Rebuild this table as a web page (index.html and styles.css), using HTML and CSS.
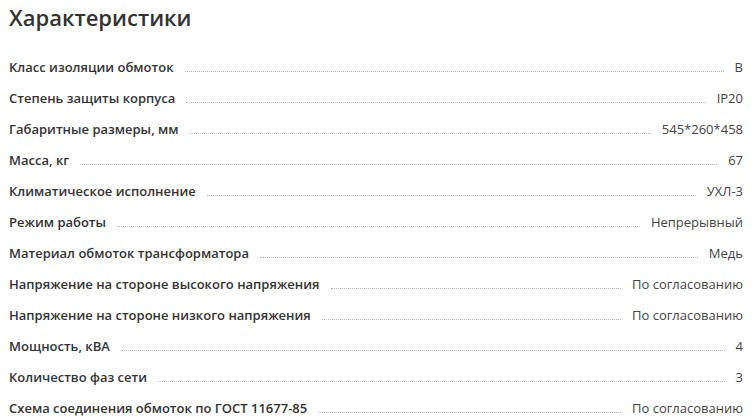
FILE: index.html
```html
<!DOCTYPE html>
<html lang="ru">
<head>
<meta charset="utf-8">
<link rel="stylesheet" href="styles.css">
</head>
<body>
<div class="specs">
  <h2 class="title">Характеристики</h2>
  <ul class="list">
    <li class="row"><span class="label">Класс изоляции обмоток</span><span class="dots"></span><span class="value">B</span></li>
    <li class="row"><span class="label">Степень защиты корпуса</span><span class="dots"></span><span class="value">IP20</span></li>
    <li class="row"><span class="label">Габаритные размеры, мм</span><span class="dots"></span><span class="value">545*260*458</span></li>
    <li class="row"><span class="label">Масса, кг</span><span class="dots"></span><span class="value">67</span></li>
    <li class="row"><span class="label">Климатическое исполнение</span><span class="dots"></span><span class="value">УХЛ-3</span></li>
    <li class="row"><span class="label">Режим работы</span><span class="dots"></span><span class="value">Непрерывный</span></li>
    <li class="row"><span class="label">Материал обмоток трансформатора</span><span class="dots"></span><span class="value">Медь</span></li>
    <li class="row"><span class="label">Напряжение на стороне высокого напряжения</span><span class="dots"></span><span class="value">По согласованию</span></li>
    <li class="row"><span class="label">Напряжение на стороне низкого напряжения</span><span class="dots"></span><span class="value">По согласованию</span></li>
    <li class="row"><span class="label">Мощность, кВА</span><span class="dots"></span><span class="value">4</span></li>
    <li class="row"><span class="label">Количество фаз сети</span><span class="dots"></span><span class="value">3</span></li>
    <li class="row"><span class="label">Схема соединения обмоток по ГОСТ 11677-85</span><span class="dots"></span><span class="value">По согласованию</span></li>
  </ul>
</div>
</body>
</html>
```

FILE: styles.css
```css
html, body {
  margin: 0;
  padding: 0;
  background: #ffffff;
}
body {
  font-family: "Open Sans", "Noto Sans", sans-serif;
  color: #333333;
}
.specs {
  padding: 0 13px 0 9px;
}
.title {
  margin: 0;
  padding-top: 2px;
  font-size: 22px;
  line-height: 30px;
  font-weight: 600;
  color: #333333;
}
.list {
  list-style: none;
  margin: 20px 0 0 0;
  padding: 0;
}
.row {
  display: flex;
  align-items: baseline;
  height: 31px;
  font-size: 13px;
  line-height: 31px;
}
.label {
  font-weight: 600;
  color: #333333;
  white-space: nowrap;
}
.dots {
  flex: 1;
  margin: 0 11px;
  border-bottom: 1px dotted #b5b5b5;
}
.value {
  font-weight: 400;
  color: #444444;
  white-space: nowrap;
}
```
